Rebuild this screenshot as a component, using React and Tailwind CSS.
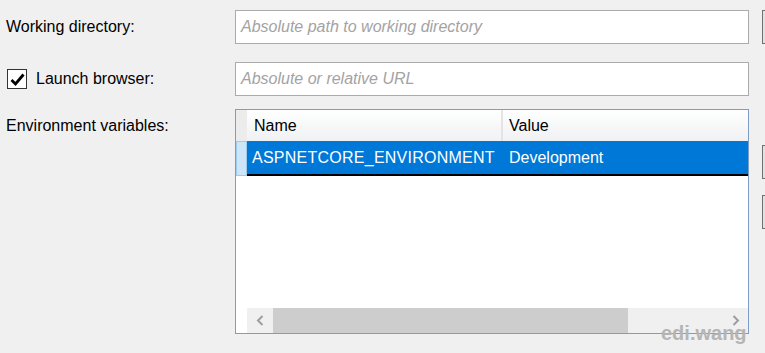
import React from 'react';

const SideButton = ({ className = '' }) => (
  <div className={`w-[30px] h-[34px] shrink-0 border border-[#707070] bg-[#e1e1e1] ${className}`}></div>
);

const Chevron = ({ dir }) => (
  <svg width="8" height="11" viewBox="0 0 8 11" className="text-[#9d9d9d]">
    {dir === 'left' ? (
      <path d="M6.5 1 L2 5.5 L6.5 10" fill="none" stroke="currentColor" strokeWidth="2" />
    ) : (
      <path d="M1.5 1 L6 5.5 L1.5 10" fill="none" stroke="currentColor" strokeWidth="2" />
    )}
  </svg>
);

const EnvTable = () => (
  <div className="w-[514px] h-[225px] shrink-0 border border-[#7f9dc4] bg-white flex flex-col">
    {/* header */}
    <div className="flex h-[31px]">
      <div className="w-[11px] bg-[#ececec]"></div>
      <div className="w-[256px] flex items-center pl-[7px] border-r-2 border-[#e4e4e4] bg-gradient-to-b from-white to-[#f0f1f3] text-black">
        Name
      </div>
      <div className="flex-1 flex items-center pl-[6px] bg-gradient-to-b from-white to-[#f0f1f3] text-black">
        Value
      </div>
    </div>
    {/* selected row */}
    <div className="flex h-[35px]">
      <div className="w-[11px] bg-[#cde6f7] border border-[#9ccbee]"></div>
      <div className="flex-1 flex bg-[#0078d7] text-white border-b-2 border-black">
        <div className="w-[256px] flex items-center pl-[5px] tracking-[0.25px]">ASPNETCORE_ENVIRONMENT</div>
        <div className="flex-1 flex items-center pl-[6px]">Development</div>
      </div>
    </div>
    <div className="flex-1"></div>
    {/* horizontal scrollbar */}
    <div className="flex h-[25px]">
      <div className="w-[11px]"></div>
      <div className="w-[26px] bg-[#f0f0f0] flex items-center justify-center">
        <Chevron dir="left" />
      </div>
      <div className="w-[355px] bg-[#cdcdcd]"></div>
      <div className="flex-1 bg-[#f0f0f0]"></div>
      <div className="w-[25px] bg-[#f0f0f0] flex items-center justify-center">
        <Chevron dir="right" />
      </div>
    </div>
  </div>
);

export default function App() {
  return (
    <div className="relative w-[765px] h-[353px] overflow-hidden bg-[#f0f0f0] text-[16px] text-black font-['Liberation_Sans',Arial,sans-serif]">
      <div className="flex flex-col pt-[10px]">
        <div className="flex items-center h-[34px]">
          <div className="w-[235px] shrink-0 pl-[6px]">Working directory:</div>
          <div className="w-[514px] h-[34px] shrink-0 border border-[#ababab] bg-white flex items-center pl-[5px] italic text-[#a3a3a3]">
            Absolute path to working directory
          </div>
          <SideButton className="ml-[13px]" />
        </div>

        <div className="flex items-center h-[34px] mt-[18px]">
          <div className="w-[235px] shrink-0 flex items-center pl-[7px]">
            <div className="w-[20px] h-[20px] border border-[#333333] bg-white flex items-center justify-center">
              <svg width="17" height="17" viewBox="0 0 17 17">
                <path d="M2.5 9 L6.5 13 L14.5 3.5" fill="none" stroke="black" strokeWidth="2.8" />
              </svg>
            </div>
            <span className="ml-[9px]">Launch browser:</span>
          </div>
          <div className="w-[514px] h-[34px] shrink-0 border border-[#ababab] bg-white flex items-center pl-[5px] italic text-[#a3a3a3]">
            Absolute or relative URL
          </div>
        </div>

        <div className="flex mt-[13px]">
          <div className="w-[235px] shrink-0 pl-[6px] pt-[7px] leading-[20px]">Environment variables:</div>
          <EnvTable />
          <div className="flex flex-col ml-[13px] pt-[36px] gap-[16px]">
            <SideButton />
            <SideButton />
          </div>
        </div>
      </div>

      <div className="absolute left-[661px] top-[323px] text-[20px] leading-[20px] font-bold text-[#b5b5b5]">
        edi.wang
      </div>
    </div>
  );
}
